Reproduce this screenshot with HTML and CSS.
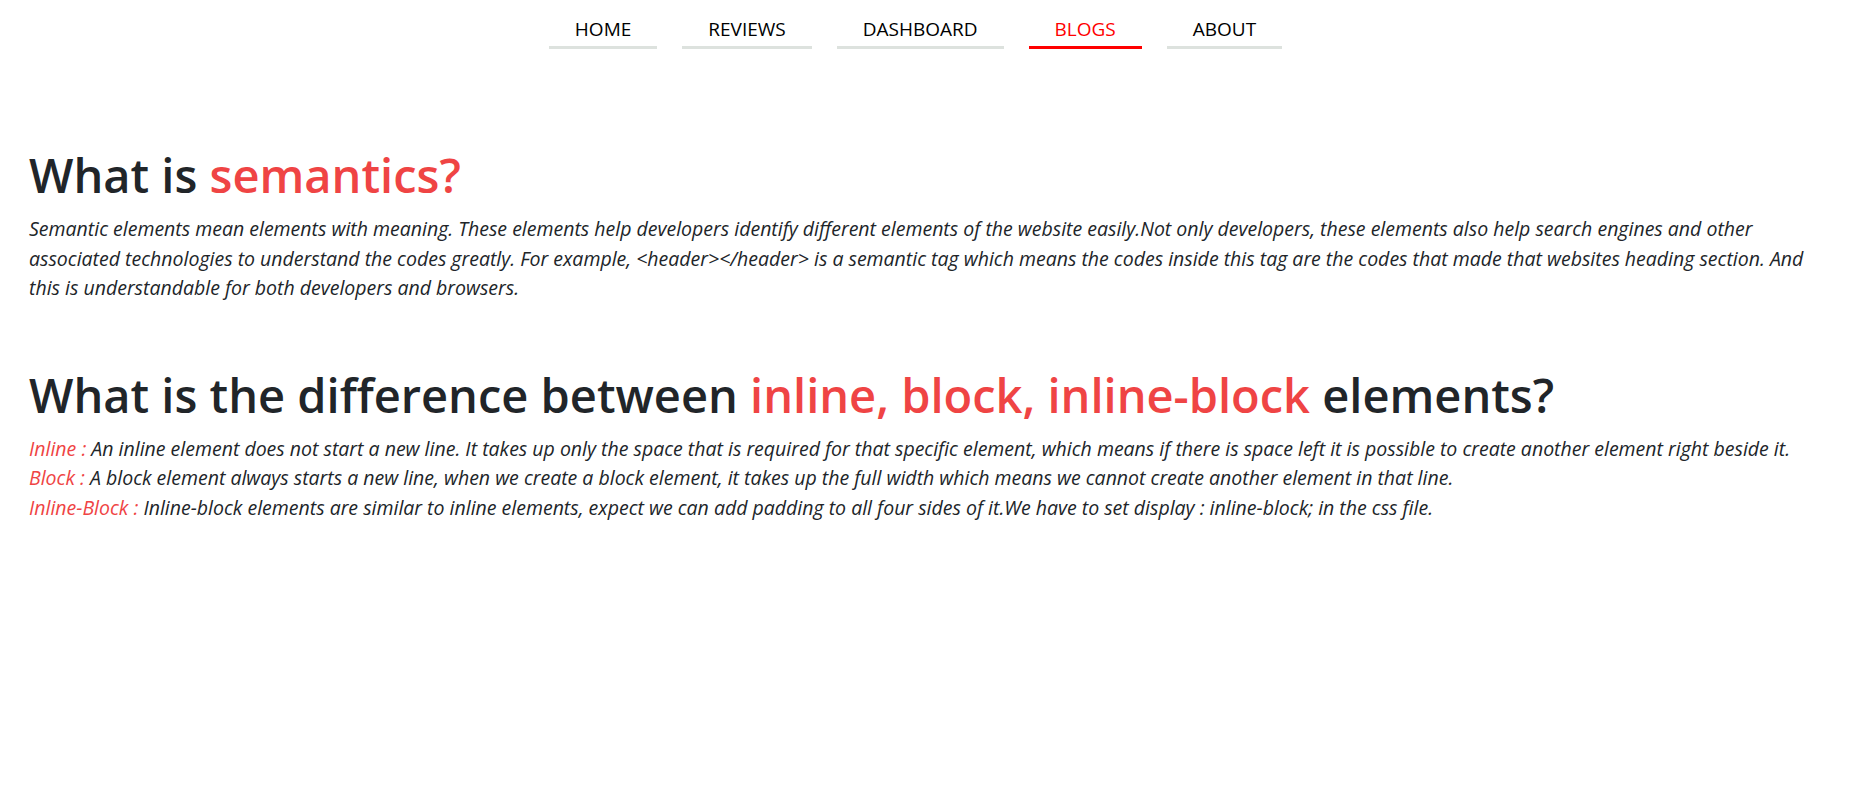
FILE: index.html
```html
<!DOCTYPE html>
<html lang="en">
<head>
<meta charset="utf-8">
<title>Blogs</title>
<link rel="stylesheet" href="styles.css">
</head>
<body>
<nav class="topnav">
  <ul class="nav-list">
    <li class="nav-item"><a class="nav-link" href="#">HOME</a></li>
    <li class="nav-item"><a class="nav-link" href="#">REVIEWS</a></li>
    <li class="nav-item"><a class="nav-link" href="#">DASHBOARD</a></li>
    <li class="nav-item active"><a class="nav-link" href="#">BLOGS</a></li>
    <li class="nav-item"><a class="nav-link" href="#">ABOUT</a></li>
  </ul>
</nav>
<main class="content">
  <section class="qa">
    <h1 class="q-title">What is <span class="accent">semantics?</span></h1>
    <p class="answer">Semantic elements mean elements with meaning. These elements help developers identify different elements of the website easily.Not only developers, these elements also help search engines and other associated technologies to understand the codes greatly. For example, &lt;header&gt;&lt;/header&gt; is a semantic tag which means the codes inside this tag are the codes that made that websites heading section. And this is understandable for both developers and browsers.</p>
  </section>
  <section class="qa">
    <h1 class="q-title">What is the difference between <span class="accent">inline, block, inline-block</span> elements?</h1>
    <div class="answer-list">
      <div class="answer-line"><span class="label">Inline :</span> An inline element does not start a new line. It takes up only the space that is required for that specific element, which means if there is space left it is possible to create another element right beside it.</div>
      <div class="answer-line"><span class="label">Block :</span> A block element always starts a new line, when we create a block element, it takes up the full width which means we cannot create another element in that line.</div>
      <div class="answer-line"><span class="label">Inline-Block :</span> Inline-block elements are similar to inline elements, expect we can add padding to all four sides of it.We have to set display : inline-block; in the css file.</div>
    </div>
  </section>
</main>
</body>
</html>
```
FILE: styles.css
```css
* { box-sizing: border-box; }
html, body { margin: 0; padding: 0; background: #fff; }
body {
  font-family: "Open Sans", "Noto Sans", sans-serif;
  color: #212529;
}
.topnav { padding-top: 16px; }
.nav-list {
  list-style: none;
  margin: 0;
  padding: 0 35px 0 0;
  display: flex;
  justify-content: center;
  gap: 25px;
}
.nav-item {
  border-bottom: 3px solid #dde2de;
  padding: 0 26px 3px;
}
.nav-link {
  display: block;
  font-size: 19px;
  line-height: 27px;
  color: #000;
  text-decoration: none;
}
.nav-item.active { border-bottom-color: #ff0000; }
.nav-item.active .nav-link { color: #ff0000; }

.content { padding: 0 29px; }
.qa:first-child { margin-top: 97px; }
.qa + .qa { margin-top: 63px; }
.q-title {
  margin: 0 0 9px;
  font-size: 47px;
  line-height: 58.8px;
  font-weight: 600;
  color: #212529;
}
.accent { color: #ef4444; }
.answer, .answer-list {
  margin: 0;
  font-size: 19.5px;
  line-height: 29.7px;
  font-style: italic;
}
.label { color: #ef4444; }
```
